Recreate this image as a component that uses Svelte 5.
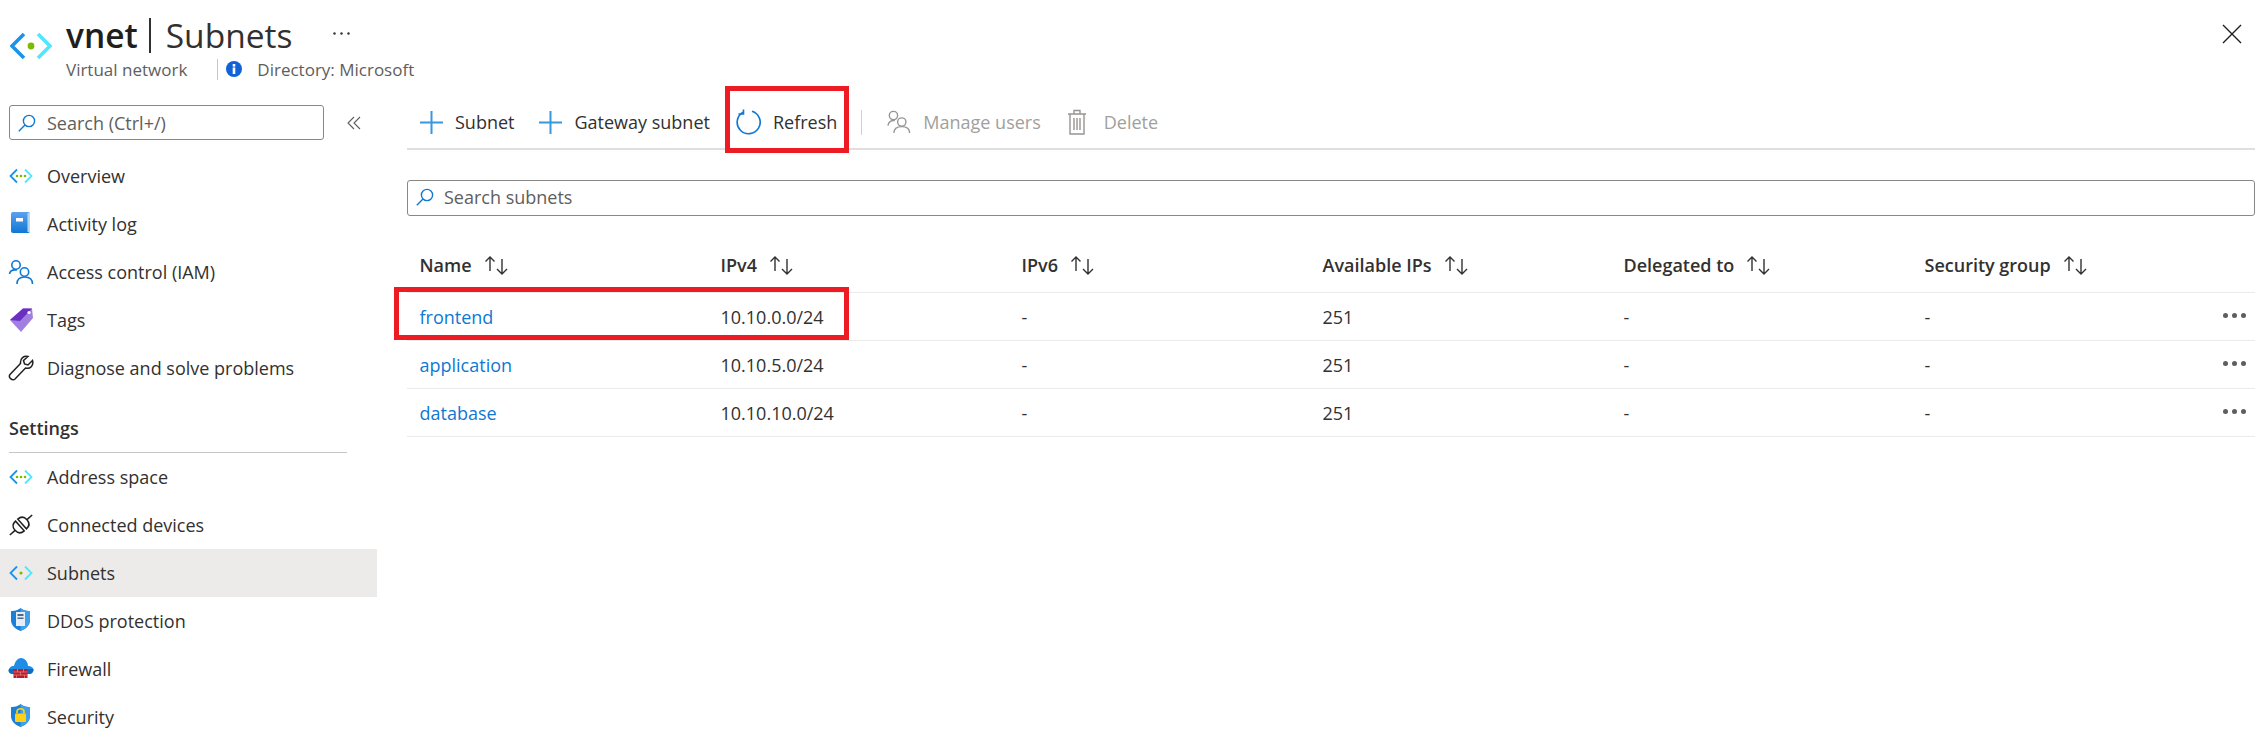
<script>
  const top = [
    { label: 'Overview', icon: 'vnet' },
    { label: 'Activity log', icon: 'log' },
    { label: 'Access control (IAM)', icon: 'iam' },
    { label: 'Tags', icon: 'tag' },
    { label: 'Diagnose and solve problems', icon: 'wrench' }
  ];
  const settings = [
    { label: 'Address space', icon: 'vnet' },
    { label: 'Connected devices', icon: 'plug' },
    { label: 'Subnets', icon: 'vnet2', active: true },
    { label: 'DDoS protection', icon: 'ddos' },
    { label: 'Firewall', icon: 'firewall' },
    { label: 'Security', icon: 'security' }
  ];
  const cols = ['Name', 'IPv4', 'IPv6', 'Available IPs', 'Delegated to', 'Security group'];
  const rows = [
    ['frontend', '10.10.0.0/24', '-', '251', '-', '-'],
    ['application', '10.10.5.0/24', '-', '251', '-', '-'],
    ['database', '10.10.10.0/24', '-', '251', '-', '-']
  ];
</script>

{#snippet search()}
  <svg class="mag" width="18" height="18" viewBox="0 0 18 18" fill="none" stroke="#0f78d4" stroke-width="1.4"><circle cx="11" cy="7" r="5.6"/><path d="M7 11 L0.8 17.2"/></svg>
{/snippet}

{#snippet plus()}
  <svg width="23" height="23" viewBox="0 0 23 23" stroke="#3a96dd" stroke-width="2"><path d="M11.5 0V23M0 11.5H23"/></svg>
{/snippet}

{#snippet sort()}
  <svg class="sort" width="24" height="20" viewBox="0 0 24 20" fill="none" stroke="#323130" stroke-width="1.4"><path d="M6 16V2M1.500 6.500L6 2L10.500 6.500"/><path d="M18 4V19M13 14L18 19L23 14"/></svg>
{/snippet}

{#snippet shield()}
  <path d="M3 3C8 3 10 2 12.500 0C15 2 17 3 22 3V12C22 18 16.500 21.500 12.500 23C8.500 21.500 3 18 3 12Z" fill="#1b7fd8"/>
  <path d="M12.500 0C15 2 17 3 22 3V12C22 18 16.500 21.500 12.500 23Z" fill="#3f9fe8"/>
{/snippet}

{#snippet navIcon(name)}
  <svg class="nav-icon" width="26" height="26" viewBox="0 0 26 26" fill="none">
    {#if name === 'vnet' || name === 'vnet2'}
      <path d="M9 6.500L2.500 13L9 19.500" stroke="#1b93eb" stroke-width="1.800"/>
      <path d="M17 6.500L23.500 13L17 19.500" stroke="#50e6ff" stroke-width="1.800"/>
      {#if name === 'vnet'}
        <circle cx="9" cy="13" r="1.300" fill="#7fba00"/><circle cx="13" cy="13" r="1.300" fill="#7fba00"/><circle cx="17" cy="13" r="1.300" fill="#7fba00"/>
      {:else}
        <circle cx="13" cy="13" r="1.600" fill="#7fba00"/>
      {/if}
    {:else if name === 'log'}
      <defs><linearGradient id="logfill" x1="0" y1="0" x2="0" y2="1"><stop offset="0" stop-color="#5ea0ef"/><stop offset="1" stop-color="#0f78d4"/></linearGradient></defs>
      <rect x="3" y="1" width="19" height="21" rx="2" fill="url(#logfill)"/>
      <rect x="19.500" y="2" width="2.500" height="19" fill="#b3d9f5"/>
      <rect x="8" y="7" width="7" height="3.500" fill="#fff"/>
    {:else if name === 'iam'}
      <g stroke="#0f78d4" stroke-width="1.600"><circle cx="8" cy="6" r="4.200"/><circle cx="16.500" cy="13" r="4.200"/><path d="M1.500 15C2 11.500 5 10.500 9 11"/><path d="M9 25C9 20 12 18 16.500 18C21 18 24.500 20 24.500 25"/></g>
    {:else if name === 'tag'}
      <path d="M2 13L15 1.500H24L25 11L13 25Z" fill="#a07fe0"/>
      <path d="M2 13L15 1.500H24L12 14Z" fill="#6b2fc4"/>
      <circle cx="21" cy="5.500" r="1.600" fill="#fff"/>
    {:else if name === 'wrench'}
      <path d="M24.500 5.500L20 10L16.500 9L15.500 5.500L20 1.500C16 0.500 12 3 12.500 8.500L2 19.500C0 22 4 26.500 7 24L17.500 13C22 14.500 26 10.500 24.500 5.500Z" stroke="#201f1e" stroke-width="1.500"/>
    {:else if name === 'plug'}
      <g stroke="#201f1e" stroke-width="1.500" transform="rotate(-42 13 13)">
        <path d="M-2 13H5"/>
        <path d="M11.500 6.500C7 6.500 5 9.500 5 13C5 16.500 7 19.500 11.500 19.500Z"/>
        <path d="M14.500 6.500C19 6.500 21 9.500 21 13C21 16.500 19 19.500 14.500 19.500Z"/>
        <path d="M21 13H28"/>
      </g>
    {:else if name === 'ddos'}
      {@render shield()}
      <rect x="8" y="4" width="9" height="14" fill="#e4eef6"/>
      <rect x="9.500" y="6" width="6" height="2" fill="#50688a"/><rect x="9.500" y="9.500" width="6" height="1.500" fill="#50688a"/>
    {:else if name === 'firewall'}
      <path d="M5 18C1 18 0 15 1 13C2 10.500 4 10 6 10C7 5 10 2 13 2C17 2 20 6 20 10C24 10 26 12.500 25.500 15C25 17 23 18 21 18Z" fill="#1f8ce6"/>
      <path d="M5 18C1 18 0 15 1 13H25.500C25 17 23 18 21 18Z" fill="#0f6cc4"/>
      <rect x="5.500" y="13" width="14" height="9" fill="#b4202a"/>
      <path d="M5.500 16H19.500M5.500 19H19.500M9.500 13V16M15.500 13V16M12.500 16V19M8.500 19V22M16.500 19V22" stroke="#e8787f" stroke-width="0.800"/>
    {:else if name === 'security'}
      {@render shield()}
      <rect x="7" y="9.500" width="11" height="8.500" rx="1" fill="#fcd116"/>
      <path d="M9 9.500V7.500C9 3.800 16 3.800 16 7.500V9.500" stroke="#fcd116" stroke-width="1.700"/>
    {/if}
  </svg>
{/snippet}

{#snippet navRow(item)}
  <li class="nav-row" class:active={item.active}>
    {@render navIcon(item.icon)}
    <span>{item.label}</span>
  </li>
{/snippet}

<div class="page">
  <header class="head">
    <svg class="logo" width="42" height="28" viewBox="0 0 42 28" fill="none">
      <path d="M14 2L2 14L14 26" stroke="#1b93eb" stroke-width="3.600"/>
      <path d="M28 2L40 14L28 26" stroke="#50e6ff" stroke-width="3.600"/>
      <circle cx="21" cy="14" r="3.400" fill="#7fba00"/>
    </svg>
    <div class="head-text">
      <div class="title-line">
        <h1><b>vnet</b><i></i>Subnets</h1>
        <svg class="more" width="17" height="3" viewBox="0 0 17 3" fill="#323130"><circle cx="1.500" cy="1.500" r="1.200"/><circle cx="8.500" cy="1.500" r="1.200"/><circle cx="15.500" cy="1.500" r="1.200"/></svg>
      </div>
      <div class="sub-line">
        <span>Virtual network</span>
        <i class="sub-sep"></i>
        <svg width="16" height="16" viewBox="0 0 16 16"><circle cx="8" cy="8" r="8" fill="#0f62d8"/><rect x="6.700" y="3" width="2.600" height="2.600" fill="#fff"/><rect x="6.700" y="6.500" width="2.600" height="6.500" fill="#fff"/></svg>
        <span class="dir">Directory: Microsoft</span>
      </div>
    </div>
    <svg class="close" width="20" height="20" viewBox="0 0 20 20" stroke="#201f1e" stroke-width="1.400"><path d="M1 1L19 19M19 1L1 19"/></svg>
  </header>

  <div class="body">
    <aside class="side">
      <div class="side-search">
        <div class="box">{@render search()}<span>Search (Ctrl+/)</span></div>
        <svg class="collapse" width="14" height="14" viewBox="0 0 14 14" fill="none" stroke="#605e5c" stroke-width="1.100"><path d="M7 1L1 7L7 13M13 1L7 7L13 13"/></svg>
      </div>
      <ul>{#each top as item}{@render navRow(item)}{/each}</ul>
      <h2>Settings</h2>
      <ul>{#each settings as item}{@render navRow(item)}{/each}</ul>
    </aside>

    <main class="main">
      <div class="toolbar">
        <button>{@render plus()}<span>Subnet</span></button>
        <button>{@render plus()}<span>Gateway subnet</span></button>
        <button>
          <svg width="26" height="26" viewBox="0 0 26 26" fill="none" stroke="#0f78d4" stroke-width="1.600"><path d="M8 3.200A11.500 11.500 0 1 0 17 2.200"/><path d="M8.500 0.500V5H3.500" /></svg>
          <span>Refresh</span>
        </button>
        <i class="tool-sep"></i>
        <button class="off">
          <svg width="24" height="26" viewBox="0 0 26 26" fill="none" stroke="#979593" stroke-width="1.500"><circle cx="7" cy="6" r="4.500"/><circle cx="16" cy="13" r="4.500"/><path d="M1 17C1.500 12.500 5 11 8.500 11.500"/><path d="M7.500 25C7.500 20.500 11 18 16 18C21 18 24.500 20.500 24.500 25"/></svg>
          <span>Manage users</span>
        </button>
        <button class="off trash">
          <svg width="18" height="26" viewBox="0 0 18 26" fill="none" stroke="#979593" stroke-width="1.400"><path d="M0 5H18M6 5V1.500H12V5M2 5V25H16V5"/><path d="M6 9V21M9 9V21M12 9V21"/></svg>
          <span>Delete</span>
        </button>
      </div>

      <div class="filter">{@render search()}<span>Search subnets</span></div>

      <div class="table">
        <div class="tr th">
          {#each cols as c}<div class="cell">{c}{@render sort()}</div>{/each}
        </div>
        {#each rows as row}
          <div class="tr">
            {#each row as value, i}
              <div class="cell" class:link={i === 0}>{value}</div>
            {/each}
            <div class="actions"><b></b><b></b><b></b></div>
          </div>
        {/each}
      </div>
    </main>
  </div>

  <div class="mark mark-refresh"></div>
  <div class="mark mark-row"></div>
</div>

<style>
  :global(body) { margin: 0; background: #fff; }
  .page {
    position: relative; width: 2260px; height: 742px; overflow: hidden;
    font-family: "Open Sans", "Noto Sans", sans-serif; font-size: 18px; color: #323130;
  }
  .head { height: 96px; display: flex; align-items: flex-start; box-sizing: border-box; padding: 17px 18px 0 10px; }
  .logo { margin-top: 15px; margin-right: 14px; flex: none; }
  .head-text { flex: 1; }
  .title-line { display: flex; align-items: center; height: 36px; }
  h1 { margin: 0; font-size: 33.5px; font-weight: 400; line-height: 36px; color: #323130; display: flex; align-items: center; }
  h1 b { font-weight: 600; color: #201f1e; }
  h1 i { width: 2px; height: 35px; background: #323130; margin: 0 15px 0 11px; }
  .more { margin-left: 41px; margin-top: -4px; }
  .sub-line { display: flex; align-items: center; height: 24px; margin-top: 4px; font-size: 17px; color: #605e5c; }
  .sub-sep { width: 1px; height: 21px; background: #c8c6c4; margin: 0 8px 0 30px; }
  .dir { margin-left: 15px; }
  .close { margin-top: 7px; flex: none; }
  .body { display: flex; }
  .side { width: 377px; flex: none; margin-right: 30px; }
  .side-search { display: flex; align-items: center; padding: 9px 0 12px 9px; }
  .box {
    width: 315px; height: 35px; box-sizing: border-box; border: 1px solid #8a8886; border-radius: 3px;
    display: flex; align-items: center; padding-left: 8px; gap: 11px; color: #605e5c;
  }
  .collapse { margin-left: 23px; }
  ul { list-style: none; margin: 0; padding: 0; }
  .nav-row { height: 48px; display: flex; align-items: center; padding-left: 8px; gap: 13px; color: #323130; }
  .nav-row.active { background: #edebe9; }
  .nav-icon { flex: none; }
  h2 {
    margin: 0 30px 0 9px; height: 61px; box-sizing: border-box; border-bottom: 1px solid #c8c6c4;
    font-size: 18px; font-weight: 600; color: #323130; line-height: 72px;
  }
  .main { flex: 1; min-width: 0; padding-right: 5px; }
  .toolbar { height: 54px; box-sizing: border-box; border-bottom: 2px solid #e1dfdd; display: flex; align-items: center; padding: 0 0 0 13px; gap: 25px; }
  button {
    all: unset; display: flex; align-items: center; gap: 12px; color: #323130;
  }
  button.off { color: #a19f9d; }
  button.trash { gap: 18px; margin-left: 2px; }
  .tool-sep { width: 1px; height: 25px; background: #d2d0ce; margin-left: -1px; }
  .filter {
    margin-top: 30px; height: 36px; box-sizing: border-box; border: 1px solid #8a8886; border-radius: 3px;
    display: flex; align-items: center; padding: 0 0 2px 8px; gap: 10px; color: #605e5c;
  }
  .table { margin-top: 28px; }
  .tr {
    position: relative; height: 48px; box-sizing: border-box; border-bottom: 1px solid #edebe9;
    display: grid; grid-template-columns: repeat(6, 301px); padding-left: 12.5px; align-items: center;
  }
  .th { height: 49px; font-weight: 600; color: #323130; padding-bottom: 6px; }
  .cell { display: flex; align-items: center; }
  .sort { margin-left: 12px; }
  .link { color: #0f78d4; }
  .actions { position: absolute; right: 9px; top: 20px; display: flex; gap: 4px; }
  .actions b { width: 5px; height: 5px; border-radius: 50%; background: #605e5c; }
  .mark { position: absolute; box-sizing: border-box; border: 5px solid #ed1c24; }
  .mark-refresh { left: 725px; top: 86px; width: 124px; height: 67px; }
  .mark-row { left: 394px; top: 287px; width: 455px; height: 53px; }
</style>
